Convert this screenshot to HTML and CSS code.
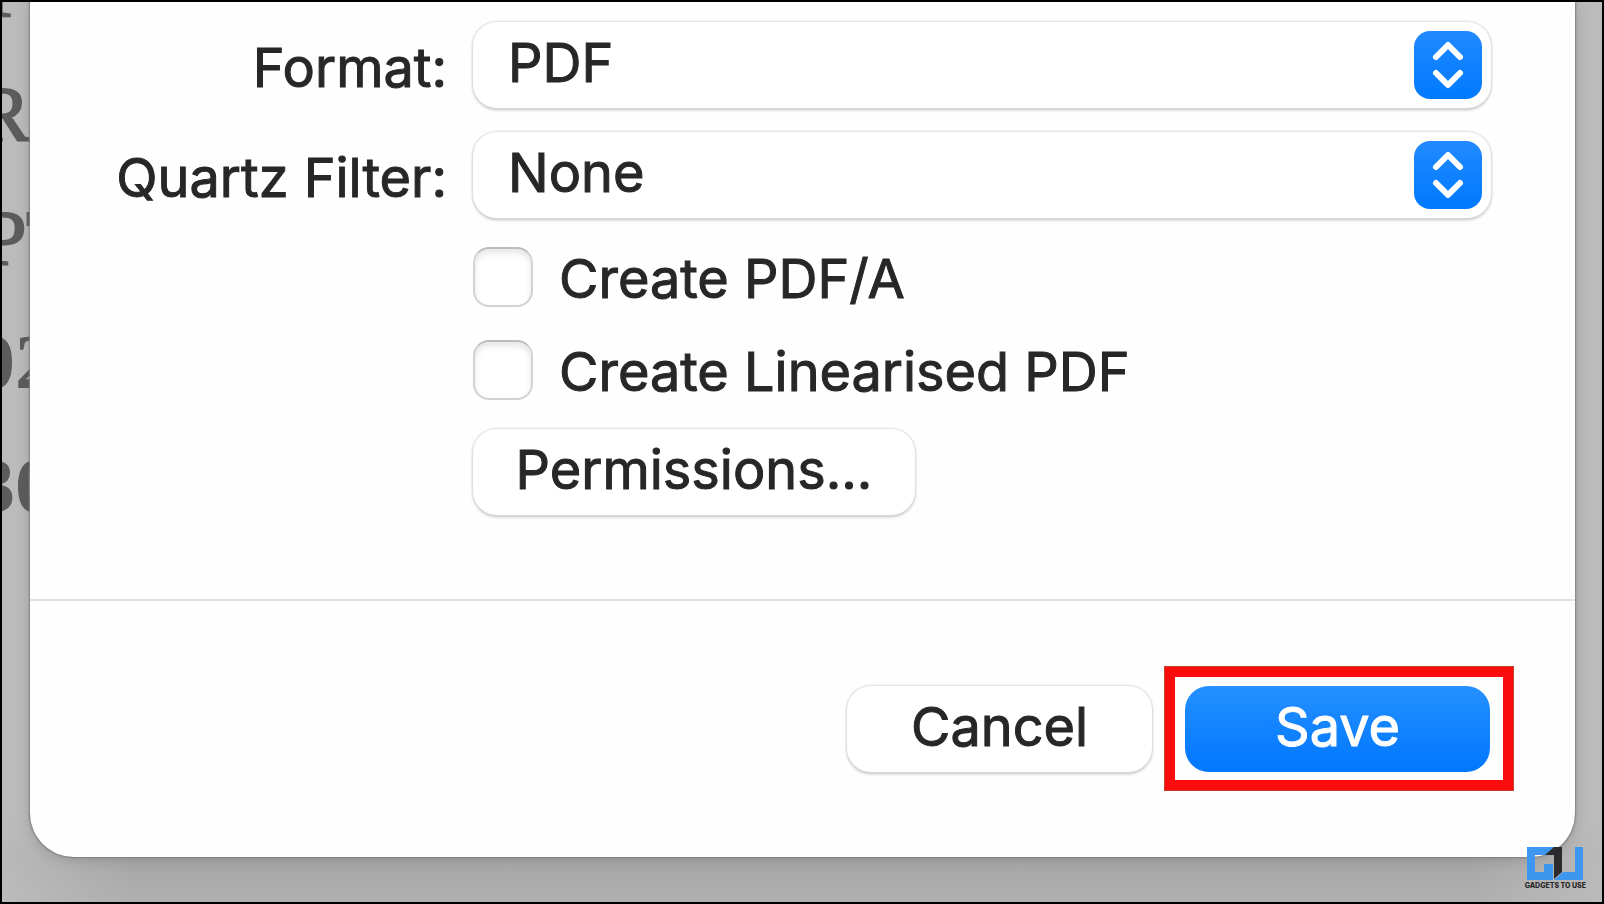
FILE: index.html
```html
<!DOCTYPE html>
<html lang="en">
<head>
  <meta charset="UTF-8">
  <meta name="viewport" content="width=device-width, initial-scale=1.0">
  <title>Export PDF</title>
  <link rel="stylesheet" href="styles.css">
</head>
<body>
  <div class="desktop">
    <!-- Document behind the sheet -->
    <div class="document" aria-hidden="true">
      <div class="line line-top">T</div>
      <div class="line">R</div>
      <div class="line line-wide">PT</div>
      <div class="line line-bold">02</div>
      <div class="line line-bold">30</div>
    </div>

    <form class="sheet">
      <div class="options">
        <label class="field-label" for="format">Format:</label>
        <div class="popup">
          <select id="format">
            <option>PDF</option>
          </select>
          <svg class="popup-arrows" viewBox="0 0 68 68" aria-hidden="true">
            <path d="M22 26 L34 14 L46 26 M22 42 L34 54 L46 42"/>
          </svg>
        </div>

        <label class="field-label" for="quartz-filter">Quartz Filter:</label>
        <div class="popup">
          <select id="quartz-filter">
            <option>None</option>
          </select>
          <svg class="popup-arrows" viewBox="0 0 68 68" aria-hidden="true">
            <path d="M22 26 L34 14 L46 26 M22 42 L34 54 L46 42"/>
          </svg>
        </div>

        <div class="extras">
          <label class="check"><input type="checkbox" name="pdfa"><span>Create PDF/A</span></label>
          <label class="check"><input type="checkbox" name="linearised"><span>Create Linearised PDF</span></label>
          <button type="button" class="btn btn-permissions">Permissions...</button>
        </div>
      </div>

      <div class="actions">
        <button type="button" class="btn">Cancel</button>
        <div class="highlight">
          <button type="submit" class="btn btn-primary">Save</button>
        </div>
      </div>
    </form>

    <div class="watermark">
      <svg class="watermark-logo" viewBox="0 0 56 33" aria-hidden="true">
        <path class="logo-blue" d="M0 0H28L19 8H8V25H17V17H26V33H0Z"/>
        <path class="logo-blue" d="M48 0H56V33H27L36 25H48Z"/>
        <path class="logo-dark" d="M27 0H35V25L27 32V8H18Z"/>
      </svg>
      <span class="watermark-text">GADGETS TO USE</span>
    </div>
  </div>
</body>
</html>
```
FILE: styles.css
```css
* { box-sizing: border-box; }
body { margin: 0; font-family: Inter, "Liberation Sans", sans-serif; font-size: 54px; line-height: 64px; color: #272727; }

.desktop { position: relative; display: flex; min-height: 100vh; padding: 0 27px 45px 28px; border: 2px solid #000; background: linear-gradient(90deg, rgba(190, 190, 190, 0.8), rgba(190, 190, 190, 0) 8%, rgba(190, 190, 190, 0) 92%, rgba(190, 190, 190, 0.8)), linear-gradient(#b2b2b2 0, #b2b2b2 90%, #a6a6a6 95%, #b0b0b0 100%); overflow: hidden; }

/* Document text, cut off by the sheet */
.document { position: absolute; top: 0; left: 0; width: 28px; overflow: hidden; font-family: "Liberation Serif", serif; font-size: 78px; line-height: 124px; color: #5c5c5c; -webkit-text-stroke: 2px #5c5c5c; }
.line { display: flex; justify-content: flex-end; height: 124px; }
.line-top { margin-top: -74px; margin-right: 8px; }
.line-wide { margin-right: -44px; }
.line-bold { font-weight: bold; margin-right: -24px; -webkit-text-stroke: 0; }

/* Sheet */
.sheet { position: relative; flex: 1; display: flex; flex-direction: column; background: #fefefe; border-radius: 0 0 44px 44px; box-shadow: 0 0 2px 1px #808080, 0 2px 14px rgba(0, 0, 0, 0.15); -webkit-text-stroke: 1px currentColor; }
.options { display: grid; grid-template-columns: 417px 1fr; column-gap: 26px; row-gap: 24px; padding: 20px 84px 84px 0; border-bottom: 2px solid #e2e2e2; }
.field-label { padding-top: 14px; text-align: right; white-space: nowrap; }

.popup { position: relative; }
.popup select { display: block; width: 100%; height: 86px; padding: 0 90px 4px 35px; border: 0; border-radius: 24px; appearance: none; font: inherit; color: inherit; background: #fff; box-shadow: 0 0 2px 1px #dcdcdc, 0 2px 3px rgba(0, 0, 0, 0.25); }
.popup-arrows { position: absolute; top: 9px; right: 9px; width: 68px; height: 68px; border-radius: 16px; background: linear-gradient(#2189ff, #007aff); pointer-events: none; }
.popup-arrows path { fill: none; stroke: #fff; stroke-width: 6; stroke-linecap: round; stroke-linejoin: round; }

.extras { grid-column: 2; display: flex; flex-direction: column; align-items: flex-start; padding-top: 3px; }
.check { display: flex; align-items: center; gap: 26px; height: 64px; margin-bottom: 29px; }
.check input { appearance: none; width: 60px; height: 60px; margin: 0; border: 2px solid #d2d2d2; border-top-color: #bcbcbc; border-radius: 16px; background: #fff; box-shadow: inset 0 4px 6px rgba(0, 0, 0, 0.1); }
.check span { padding-top: 4px; }

.btn { width: 305px; height: 86px; padding: 0 0 4px; border: 0; border-radius: 24px; font: inherit; color: inherit; background: #fff; box-shadow: 0 0 2px 1px #dcdcdc, 0 2px 3px rgba(0, 0, 0, 0.25); }
.btn-permissions { width: 442px; margin-top: -2px; }
.btn-primary { display: block; color: #fff; background: linear-gradient(#2590ff, #0077ff); box-shadow: none; }

.actions { display: flex; justify-content: flex-end; align-items: center; gap: 13px; padding: 66px 62px 64px 0; }
.highlight { padding: 9px 13px 8px 10px; border: 10px solid #fb0d0d; outline: 1px solid #c8402c; }

/* Site mark in the corner */
.watermark { position: absolute; right: 16px; bottom: 12px; display: flex; flex-direction: column; align-items: center; gap: 2px; }
.watermark-logo { width: 56px; height: 33px; }
.logo-blue { fill: #3e97ee; }
.logo-dark { fill: #2b2b2d; }
.watermark-text { font-size: 7px; line-height: 8px; font-weight: 800; }
```
